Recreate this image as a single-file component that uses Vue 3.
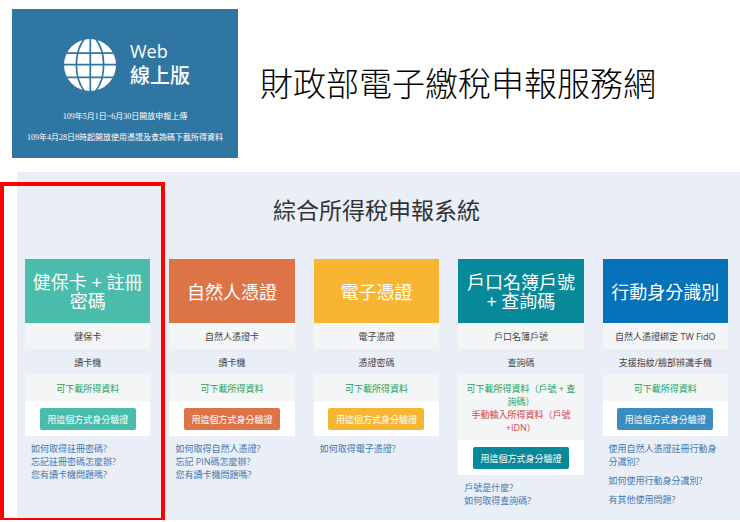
<script setup>
const ask = '用這個方式身分驗證'
const cards = [
  {
    id: 'nhi', lines: ['健保卡 + 註冊', '密碼'], need: ['健保卡', '讀卡機'],
    can: '可下載所得資料', focus: true,
    links: ['如何取得註冊密碼?', '忘記註冊密碼怎麼辦?', '您有讀卡機問題嗎?'],
  },
  {
    id: 'citizen', lines: ['自然人憑證'], need: ['自然人憑證卡', '讀卡機'],
    can: '可下載所得資料',
    links: ['如何取得自然人憑證?', '忘記 PIN碼怎麼辦?', '您有讀卡機問題嗎?'],
  },
  {
    id: 'finance', lines: ['電子憑證'], need: ['電子憑證', '憑證密碼'],
    can: '可下載所得資料', links: ['如何取得電子憑證?'],
  },
  {
    id: 'household', lines: ['戶口名簿戶號', '+ 查詢碼'], need: ['戶口名簿戶號', '查詢碼'],
    can: '可下載所得資料（戶號 + 查詢碼）', manual: '手動輸入所得資料（戶號+IDN）',
    links: ['戶號是什麼?', '如何取得查詢碼?'],
  },
  {
    id: 'mobile', lines: ['行動身分識別'], need: ['自然人憑證綁定 TW FidO', '支援指紋/臉部辨識手機'],
    can: '可下載所得資料', spaced: true,
    links: ['使用自然人憑證註冊行動身分識別?', '如何使用行動身分識別?', '有其他使用問題?'],
  },
]
</script>

<template>
  <div class="page">
    <header class="top">
      <div class="banner">
        <div class="brand">
          <svg class="globe" viewBox="0 0 52 52" aria-hidden="true">
            <circle cx="26" cy="26" r="26" fill="#fff" />
            <g fill="none" stroke="#3076a3" stroke-width="1.7">
              <path d="M0 14.2H52M0 25.6H52M0 38.4H52M26.3 0V52" />
              <path d="M21 -1C9.500 13 9.500 39 21 53M31 -1C42.500 13 42.500 39 31 53" />
            </g>
          </svg>
          <div class="brand-name">
            <span class="web">Web</span>
            <span class="online">線上版</span>
          </div>
        </div>
        <p>109年5月1日~6月30日開放申報上傳</p>
        <p>109年4月28日8時起開放使用憑證及查詢碼下載所得資料</p>
      </div>
      <h1>財政部電子繳稅申報服務網</h1>
    </header>

    <main class="system">
      <h2>綜合所得稅申報系統</h2>
      <div class="cards">
        <section v-for="c in cards" :key="c.id" class="card" :class="c.id">
          <h3><span v-for="l in c.lines" :key="l">{{ l }}</span></h3>
          <p class="row shade">{{ c.need[0] }}</p>
          <p class="row">{{ c.need[1] }}</p>
          <div class="row shade">
            <p class="can">{{ c.can }}</p>
            <p v-if="c.manual" class="manual">{{ c.manual }}</p>
          </div>
          <div class="action"><button type="button">{{ ask }}</button></div>
          <ul :class="{ spaced: c.spaced }">
            <li v-for="l in c.links" :key="l"><a href="#">{{ l }}</a></li>
          </ul>
          <div v-if="c.focus" class="frame"></div>
        </section>
      </div>
    </main>
  </div>
</template>

<style>
body {
  margin: 0;
  background: #fff;
}
</style>

<style scoped>
.page {
  font-family: "Open Sans", "Noto Sans CJK TC", sans-serif;
  font-size: 9px;
  line-height: 13px;
  color: #444;
}
h1, h2, h3, p, ul {
  margin: 0;
  padding: 0;
  font-weight: 400;
}
.top {
  display: flex;
  align-items: center;
  gap: 22px;
  padding: 9px 12px 14px;
}
.banner {
  flex: none;
  box-sizing: border-box;
  width: 226px;
  padding: 30px 0 14px;
  background: #3076a3;
  color: #fff;
  text-align: center;
  font: 8px/13px "Liberation Serif", "Noto Sans CJK TC", serif;
}
.brand {
  display: flex;
  align-items: center;
  gap: 14px;
  padding: 0 0 19px 52px;
  text-align: left;
  font-family: "Open Sans", "Noto Sans CJK TC", sans-serif;
  font-weight: 500;
}
.globe {
  width: 52px;
  height: 52px;
}
.brand-name {
  display: grid;
  padding-bottom: 2px;
}
.web {
  font-size: 18px;
  line-height: 24px;
}
.online {
  font-size: 20px;
  line-height: 26px;
}
.banner p + p {
  margin-top: 8px;
}
h1 {
  padding-bottom: 3px;
  font-family: "Noto Sans CJK TC", sans-serif;
  font-weight: 300;
  font-size: 33px;
  line-height: 40px;
  white-space: nowrap;
  color: #000;
}
.system {
  margin-left: 17px;
  padding: 22px 12px 0 8px;
  background: #eaeef6;
}
h2 {
  padding-bottom: 33px;
  text-align: center;
  font-size: 23px;
  line-height: 32px;
  color: #333;
}
.cards {
  display: grid;
  grid-template-columns: repeat(5, minmax(0, 1fr));
  gap: 19px;
}
.card {
  position: relative;
  padding-bottom: 13px;
}
h3 {
  display: flex;
  flex-direction: column;
  align-items: center;
  justify-content: center;
  box-sizing: border-box;
  height: 64px;
  padding-top: 2px;
  background: var(--tone);
  color: #fff;
  font-size: 18px;
  line-height: 19px;
  white-space: nowrap;
}
.nhi { --tone: #49bcab; }
.citizen { --tone: #dd7448; }
.finance { --tone: #f6b632; }
.household { --tone: #078999; }
.mobile { --tone: #0471b8; }
.row {
  padding: 7px 8px 6px;
  text-align: center;
}
.shade {
  background: #f4f5f6;
}
.can {
  color: #17a35e;
}
.manual {
  color: #d9434a;
}
.action {
  display: flex;
  justify-content: center;
  padding: 7px 0 6px;
  background: #fff;
}
button {
  width: 96px;
  height: 22px;
  padding: 0;
  border: 0;
  border-radius: 2px;
  background: var(--tone);
  color: #fff;
  font: inherit;
}
.mobile button {
  background: #3a8dc0;
}
ul {
  padding: 6px 6px 0;
  list-style: none;
}
.spaced li + li {
  margin-top: 6px;
}
a {
  color: #4378b0;
  text-decoration: none;
}
.frame {
  position: absolute;
  inset: -77px -15px -2px -25px;
  border: 4px solid #fe0000;
  pointer-events: none;
}
</style>
